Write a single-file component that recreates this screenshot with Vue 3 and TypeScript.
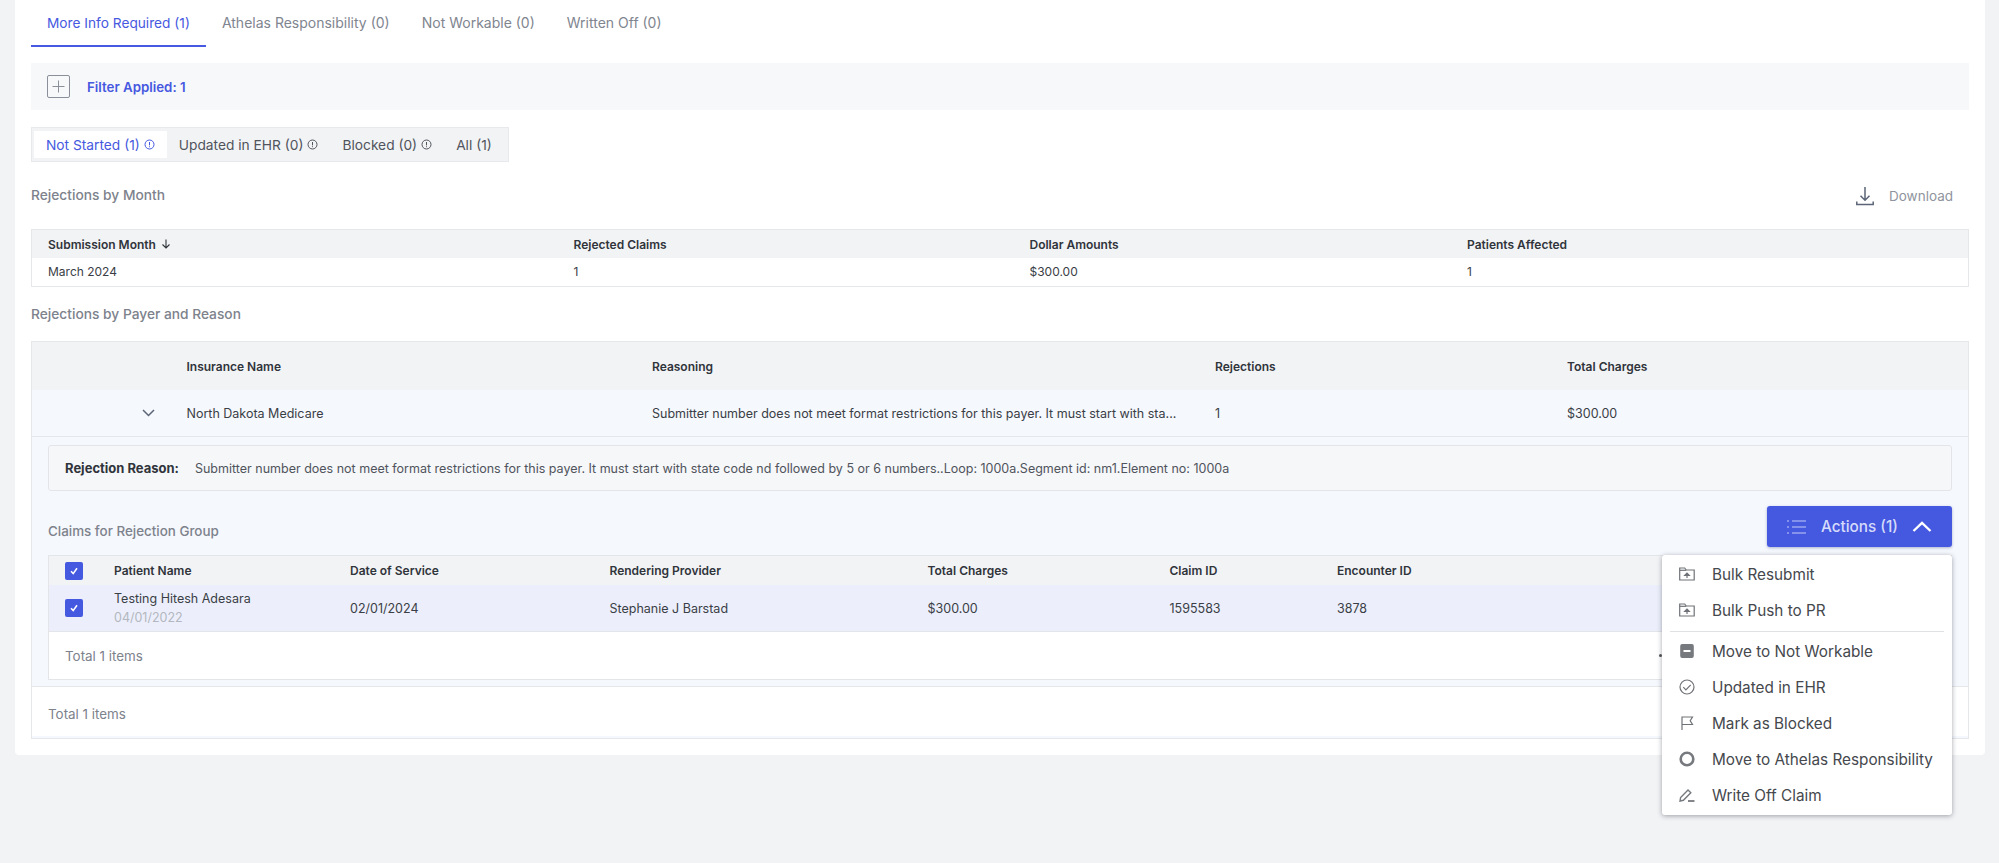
<script setup lang="ts">
const tabs = ['More Info Required (1)', 'Athelas Responsibility (0)', 'Not Workable (0)', 'Written Off (0)']
const segments = [
  { label: 'Not Started (1)', info: true },
  { label: 'Updated in EHR (0)', info: true },
  { label: 'Blocked (0)', info: true },
  { label: 'All (1)', info: false },
]
const reason = 'Submitter number does not meet format restrictions for this payer. It must start with state code nd followed by 5 or 6 numbers..Loop: 1000a.Segment id: nm1.Element no: 1000a'
</script>

<template>
  <div class="page">
    <main class="card">
      <nav class="tabs">
        <a v-for="(t, i) in tabs" :key="t" class="tab" :class="{ on: i === 0 }">{{ t }}</a>
      </nav>

      <div class="filter">
        <span class="plus">
          <svg width="13" height="13" viewBox="0 0 13 13"><path d="M6.5 0.5v12M0.5 6.5h12" stroke="#8a8f99" stroke-width="1" fill="none" /></svg>
        </span>
        <span class="filter-text">Filter Applied: 1</span>
      </div>

      <div class="segments">
        <div v-for="(s, i) in segments" :key="s.label" class="seg" :class="{ on: i === 0 }">
          <span>{{ s.label }}</span>
          <svg v-if="s.info" class="info" width="11" height="11" viewBox="0 0 11 11">
            <circle cx="5.5" cy="5.5" r="4.5" fill="none" stroke="currentColor" stroke-width="1" />
            <path d="M5.5 3v3.4M5.5 7.3v.9" stroke="currentColor" stroke-width="1" fill="none" />
          </svg>
        </div>
      </div>

      <div class="section-head">
        <span class="title">Rejections by Month</span>
        <span class="download">
          <svg width="18" height="20" viewBox="0 0 18 20">
            <path d="M9 1v13M4.5 9.8 9 14.3l4.500-4.500" stroke="#5c6577" stroke-width="1.500" fill="none" />
            <path d="M.8 15.500v3h16.400v-3" stroke="#5c6577" stroke-width="1.500" fill="none" />
          </svg>
          <span>Download</span>
        </span>
      </div>

      <section class="table t1">
        <div class="row head cols1">
          <span class="sort">Submission Month
            <svg class="sort-arrow" width="10" height="10" viewBox="0 0 10 10"><path d="M5 .5v8.500M1.500 5.500 5 9l3.500-3.500" stroke="#30343b" stroke-width="1.100" fill="none" /></svg>
          </span>
          <span>Rejected Claims</span><span>Dollar Amounts</span><span>Patients Affected</span>
        </div>
        <div class="row body cols1">
          <span>March 2024</span><span>1</span><span>$300.00</span><span>1</span>
        </div>
      </section>

      <div class="title title2">Rejections by Payer and Reason</div>

      <section class="table t2">
        <div class="row head cols2 h49">
          <span></span><span>Insurance Name</span><span>Reasoning</span><span>Rejections</span><span>Total Charges</span>
        </div>
        <div class="row tint cols2 r47">
          <span class="chev">
            <svg width="13" height="8" viewBox="0 0 13 8"><path d="M1 1l5.500 5.500L12 1" stroke="#5c6577" stroke-width="1.500" fill="none" /></svg>
          </span>
          <span>North Dakota Medicare</span>
          <span class="ellipsis">Submitter number does not meet format restrictions for this payer. It must start with sta...</span>
          <span>1</span><span>$300.00</span>
        </div>

        <div class="expanded">
          <div class="reason">
            <b>Rejection Reason:</b>
            <span>{{ reason }}</span>
          </div>

          <div class="claims-head">
            <span class="title claims-title">Claims for Rejection Group</span>
            <div class="actions-wrap">
              <button class="actions" type="button">
                <svg width="20" height="16" viewBox="0 0 20 16">
                  <path d="M5 2h14M5 8h14M5 14h14" stroke="#c3cbf7" stroke-width="1.200" fill="none" />
                  <path d="M0 2h2M0 8h2M0 14h2" stroke="#c3cbf7" stroke-width="1.200" fill="none" />
                </svg>
                <span>Actions (1)</span>
                <svg width="20" height="12" viewBox="0 0 20 12"><path d="M1.500 10 10 2l8.500 8" stroke="#fff" stroke-width="2.400" fill="none" /></svg>
              </button>

              <div class="menu">
                <div class="item">
                  <svg class="ic" viewBox="0 0 16 14"><path d="M.7 13V1h5l1.500 2h8v10z" fill="none" stroke="#6f7277" stroke-width="1.200" /><path d="M.7 3.300h6.500" stroke="#6f7277" stroke-width="1.200" /><path d="M8 11V6.500M5.700 8.400 8 6l2.300 2.400z" stroke="#6f7277" stroke-width="1.200" fill="#6f7277" /></svg>
                  <span>Bulk Resubmit</span>
                </div>
                <div class="item">
                  <svg class="ic" viewBox="0 0 16 14"><path d="M.7 13V1h5l1.500 2h8v10z" fill="none" stroke="#6f7277" stroke-width="1.200" /><path d="M.7 3.300h6.500" stroke="#6f7277" stroke-width="1.200" /><path d="M8 11V6.500M5.700 8.400 8 6l2.300 2.400z" stroke="#6f7277" stroke-width="1.200" fill="#6f7277" /></svg>
                  <span>Bulk Push to PR</span>
                </div>
                <div class="sep"></div>
                <div class="item">
                  <svg class="ic" viewBox="0 0 16 14"><rect x="1.200" y="0" width="13.600" height="14" rx="2" fill="#76797e" /><rect x="4.500" y="6" width="7" height="2" fill="#fff" /></svg>
                  <span>Move to Not Workable</span>
                </div>
                <div class="item">
                  <svg class="ic" viewBox="0 0 16 16"><circle cx="8" cy="8" r="7" fill="none" stroke="#6f7277" stroke-width="1.200" /><path d="M4.300 8.200l2.600 2.600 4.800-5" fill="none" stroke="#6f7277" stroke-width="1.200" /></svg>
                  <span>Updated in EHR</span>
                </div>
                <div class="item">
                  <svg class="ic" viewBox="0 0 16 16"><path d="M3 15V2h10.500l-2.300 3.800 2.300 3.700H3" fill="none" stroke="#6f7277" stroke-width="1.200" /></svg>
                  <span>Mark as Blocked</span>
                </div>
                <div class="item">
                  <svg class="ic" viewBox="0 0 16 16"><circle cx="8" cy="8" r="6.300" fill="none" stroke="#76797e" stroke-width="2.600" /></svg>
                  <span>Move to Athelas Responsibility</span>
                </div>
                <div class="item">
                  <svg class="ic" viewBox="0 0 16 14"><path d="M1 13l.6-3.500L9 2l2.800 2.800L4.400 12.300z" fill="none" stroke="#76797e" stroke-width="1.400" /><path d="M9 13h6.500" stroke="#76797e" stroke-width="1.800" /></svg>
                  <span>Write Off Claim</span>
                </div>
              </div>
            </div>
          </div>

          <section class="sub">
            <div class="row head cols3 h30">
              <span class="check">
                <svg width="10" height="10" viewBox="0 0 10 10"><path d="M2 5.300l2.200 2.300L8 2.200" stroke="#fff" stroke-width="1.600" fill="none" /></svg>
              </span>
              <span>Patient Name</span><span>Date of Service</span><span>Rendering Provider</span><span>Total Charges</span><span>Claim ID</span><span>Encounter ID</span>
            </div>
            <div class="row selected cols3 r47">
              <span class="check">
                <svg width="10" height="10" viewBox="0 0 10 10"><path d="M2 5.300l2.200 2.300L8 2.200" stroke="#fff" stroke-width="1.600" fill="none" /></svg>
              </span>
              <span class="patient"><span>Testing Hitesh Adesara</span><small>04/01/2022</small></span>
              <span>02/01/2024</span><span>Stephanie J Barstad</span><span>$300.00</span><span>1595583</span><span>3878</span>
            </div>
            <div class="foot inner-foot"><span>Total 1 items</span><i class="dot"></i></div>
          </section>
        </div>

        <div class="foot outer-foot"><span>Total 1 items</span></div>
      </section>
    </main>
  </div>
</template>

<style>
html, body { margin: 0; background: #f2f3f5; }
</style>

<style scoped>
.page {
  height: 863px;
  overflow: hidden;
  background: #f2f3f5;
  font-family: Inter, "Liberation Sans", sans-serif;
  font-size: 12px;
  color: #3a3e45;
}
.card {
  box-sizing: border-box;
  width: 1970px;
  height: 755px;
  margin-left: 15px;
  padding: 0 16px;
  background: #fff;
  border-radius: 0 0 4px 4px;
}
.tabs { display: flex; height: 47px; }
.tab {
  box-sizing: border-box;
  height: 47px;
  padding: 15px 16px 0;
  font-size: 14px;
  line-height: 16px;
  color: #80858f;
}
.tab.on { color: #4659e0; border-bottom: 2px solid #4659e0; font-size: 13.700px; }
.filter {
  display: flex;
  align-items: center;
  height: 47px;
  margin-top: 16px;
  padding-left: 16px;
  background: #f7f8fa;
}
.plus {
  box-sizing: border-box;
  width: 23px;
  height: 23px;
  border: 1px solid #8a8f99;
  border-radius: 2px;
  display: flex;
  align-items: center;
  justify-content: center;
}
.filter-text { margin-left: 17px; color: #4659e0; font-weight: 600; font-size: 13.300px; }
.segments {
  box-sizing: border-box;
  height: 35px;
  margin-top: 17px;
  padding: 3px 2px;
  width: 478px;
  background: #f2f3f5;
  border: 1px solid #e8e9ec;
  display: flex;
  align-items: stretch;
}
.seg {
  display: flex;
  align-items: center;
  gap: 4px;
  padding: 0 12px;
  font-size: 13.750px;
  color: #50545c;
}
.seg.on { background: #fff; color: #4659e0; }
.info { flex: none; }
.section-head {
  display: flex;
  align-items: center;
  justify-content: space-between;
  height: 34px;
  margin-top: 16px;
  padding-right: 16px;
}
.title { font-size: 13.750px; font-weight: 500; color: #7d828c; }
.download { display: flex; align-items: center; gap: 15px; font-size: 13.500px; color: #8f949e; margin-top: 2px; }
.table { border: 1px solid #e6e7ea; box-sizing: border-box; }
.t1 { height: 58px; margin-top: 17px; }
.t2 { height: 398px; background: #f5f8fd; }
.title2 { margin-top: 10px; height: 44px; line-height: 34px; }
.row { display: grid; align-items: center; }
.head { background: #f2f3f5; font-weight: 600; color: #30343b; font-size: 12px; height: 28px; }
.body { box-sizing: border-box; height: 28px; padding-bottom: 1px; background: #fff; font-size: 12px; }
.sort-arrow { margin-left: 2px; }
.cols1 { grid-template-columns: 525.500px 456px 437.500px 1fr; padding-left: 16px; }
.cols2 { grid-template-columns: 154.500px 465.500px 563px 352px 1fr; }
.h49 { height: 48px; }
.r47 { height: 47px; font-size: 12.500px; }
.tint { border-bottom: 1px solid #e6e7ea; background: #f5f8fd; box-sizing: border-box; }
.chev { justify-self: end; margin-right: 32px; display: flex; }
.ellipsis { white-space: nowrap; overflow: hidden; }
.expanded { padding: 8px 16px 0; box-sizing: border-box; height: 250px; border-bottom: 1px solid #e6e7ea; }
.reason {
  box-sizing: border-box;
  height: 46px;
  display: flex;
  align-items: center;
  gap: 16px;
  padding-left: 16px;
  background: #f6f7f9;
  border: 1px solid #e3e5e9;
  border-radius: 3px;
  font-size: 12.500px;
  color: #50545c;
}
.reason b { color: #30343b; font-weight: 700; font-size: 13px; }
.claims-head {
  display: flex;
  align-items: center;
  justify-content: space-between;
  height: 41px;
  margin-top: 15px;
  margin-bottom: 8px;
}
.claims-title { font-size: 13.400px; margin-top: 8px; }
.actions-wrap { position: relative; }
.actions {
  box-sizing: border-box;
  width: 185px;
  height: 41px;
  display: flex;
  align-items: center;
  justify-content: center;
  gap: 14px;
  border: 0;
  border-radius: 3px;
  background: #4558e0;
  color: #d5dbfa;
  font: 500 15.300px Inter, "Liberation Sans", sans-serif;
  box-shadow: 0 1px 3px rgba(40, 50, 120, .35);
  padding: 0;
}
.menu {
  position: absolute;
  z-index: 5;
  top: 49px;
  right: 0;
  width: 290px;
  height: 260px;
  box-sizing: border-box;
  padding-top: 1px;
  background: #fff;
  border-radius: 3px;
  box-shadow: 0 1px 5px rgba(30, 35, 50, .4);
}
.item {
  display: flex;
  align-items: center;
  height: 36px;
  padding-left: 17px;
  gap: 17px;
  font-size: 15.300px;
  color: #45484d;
  white-space: nowrap;
}
.ic { width: 16px; height: 16px; flex: none; }
.sep { height: 1px; margin: 3px 8px 1px; background: #e0e1e4; }
.sub { border: 1px solid #e3e5e9; box-sizing: border-box; height: 125px; background: #fff; }
.cols3 { grid-template-columns: 49px 236px 259.500px 318px 242px 167.500px 1fr; padding-left: 16px; }
.h30 { height: 29px; background: #f2f3f5; }
.selected { background: #eceffb; border-bottom: 1px solid #e3e5e9; box-sizing: border-box; }
.check {
  width: 18px;
  height: 18px;
  border-radius: 2px;
  background: #4558e0;
  display: flex;
  align-items: center;
  justify-content: center;
}
.patient { display: flex; flex-direction: column; gap: 4px; line-height: 15px; }
.patient small { font-size: 12.500px; color: #b3b7bf; }
.foot {
  display: flex;
  align-items: center;
  justify-content: space-between;
  padding-left: 16px;
  background: #fff;
  font-size: 13.400px;
  color: #7d828c;
}
.inner-foot { height: 47px; }
.outer-foot { height: 49px; padding-top: 4px; box-sizing: border-box; }
.dot { width: 3px; height: 3px; border-radius: 50%; background: #555; margin-right: 289px; }
</style>
